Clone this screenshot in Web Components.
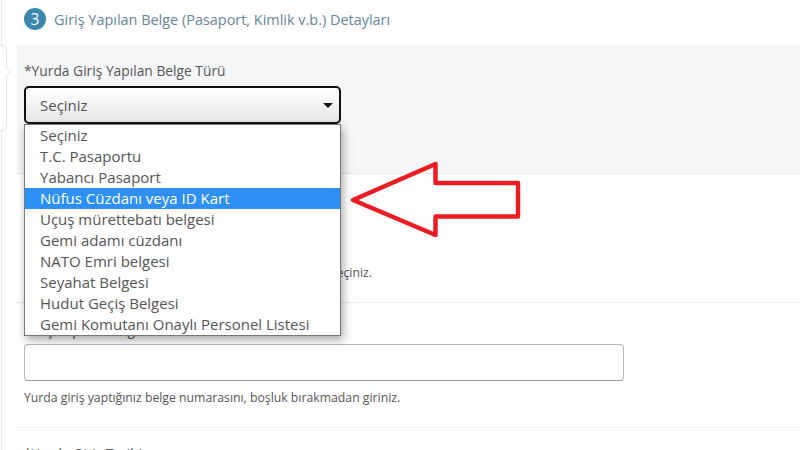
<!DOCTYPE html>
<html lang="tr">
<head>
<meta charset="UTF-8">
<title>Belge Detayları</title>
<style>
  html, body { margin: 0; height: 450px; overflow: hidden; background: #fff; }
  body { font-family: "Open Sans", "Liberation Sans", sans-serif; color: #555; }
</style>
</head>
<body>
<template id="tpl-page">
  <style>
    :host { display: block; position: relative; height: 450px; overflow: hidden; padding-left: 17px; box-sizing: border-box; }
    .rail { position: absolute; left: 1px; top: 0; bottom: 0; width: 1px; background: #e8e8e8; }
    .bubble { position: absolute; left: -10px; top: 45px; width: 15px; height: 84px; background: #fff; border: 1px solid #dfe6ee; border-radius: 5px; }
    .bubble::after { content: ""; position: absolute; right: -4px; top: 22px; width: 6px; height: 6px; background: #fff; border-top: 1px solid #dfe6ee; border-right: 1px solid #dfe6ee; transform: rotate(45deg); }
  </style>
  <div class="rail"></div>
  <div class="bubble"></div>
  <slot></slot>
</template>

<template id="tpl-heading">
  <style>
    :host { display: flex; align-items: center; gap: 8px; height: 45px; padding: 0 0 7px 7px; box-sizing: border-box; color: #64859c; font-size: 14.45px; }
    .num { width: 22px; height: 22px; border-radius: 50%; background: #3b87ad; color: #fff; font-size: 15.5px; display: flex; align-items: center; justify-content: center; }
  </style>
  <span class="num"><slot name="num"></slot></span>
  <span><slot></slot></span>
</template>

<template id="tpl-row">
  <style>
    :host { display: block; box-sizing: border-box; padding: 0 0 0 7px; border-bottom: 1px dotted #dcdcdc; }
    :host([shaded]) { background: #f5f6f8; }
  </style>
  <slot></slot>
</template>

<template id="tpl-label">
  <style>
    :host { display: block; font-size: 13.8px; line-height: 20px; color: #555; }
  </style>
  <slot></slot>
</template>

<template id="tpl-hint">
  <style>
    :host { display: block; font-size: 12.25px; line-height: 16px; color: #555; }
  </style>
  <slot></slot>
</template>

<template id="tpl-select">
  <style>
    :host { display: flex; align-items: center; justify-content: space-between; box-sizing: border-box; width: 317px; height: 38px; padding: 0 6px 0 14px; border: 2px solid #111; border-radius: 5px; background: linear-gradient(#fff, #e6e6e6); font-size: 15px; color: #555; }
    i { width: 0; height: 0; border: 5px solid transparent; border-top: 5px solid #111; border-bottom: 0; }
  </style>
  <span><slot></slot></span><i></i>
</template>

<template id="tpl-input">
  <style>
    :host { display: block; box-sizing: border-box; width: 600px; height: 37px; background: #fff; border: 1px solid #b9b9b9; border-bottom-color: #a0a0a0; border-radius: 4px; }
  </style>
</template>

<template id="tpl-menu">
  <style>
    :host { display: block; position: absolute; left: 24px; top: 124px; width: 317px; height: 212px; box-sizing: border-box; background: #fff; border: 1px solid #777; box-shadow: 2px 4px 9px rgba(0,0,0,.35); }
  </style>
  <slot></slot>
</template>

<template id="tpl-option">
  <style>
    :host { display: block; height: 21px; line-height: 21px; padding-left: 15px; font-size: 15px; color: #555; white-space: nowrap; }
    :host([active]) { background: #2e90f5; color: #fff; }
  </style>
  <slot></slot>
</template>

<template id="tpl-arrow">
  <style>
    :host { display: block; position: absolute; left: 348px; top: 158px; width: 176px; height: 82px; }
    svg { display: block; }
  </style>
  <svg width="176" height="82" viewBox="348 158 176 82">
    <path d="M353 200 L435.5 164 L435.5 183 L518 183 L518 216.5 L435.5 216.5 L435.5 235 Z" fill="none" stroke="#ea1c24" stroke-width="4.5" stroke-linejoin="round"/>
  </svg>
</template>

<script>
  function define(name, tplId) {
    customElements.define(name, class extends HTMLElement {
      constructor() {
        super()
        this.attachShadow({ mode: "open" })
        this.shadowRoot.append(document.getElementById(tplId).content.cloneNode(true))
      }
    })
  }
  define("form-page", "tpl-page")
  define("step-heading", "tpl-heading")
  define("form-row", "tpl-row")
  define("form-label", "tpl-label")
  define("form-hint", "tpl-hint")
  define("form-select", "tpl-select")
  define("form-input", "tpl-input")
  define("select-menu", "tpl-menu")
  define("select-option", "tpl-option")
  define("red-arrow", "tpl-arrow")
</script>

<form-page>
  <step-heading><span slot="num">3</span>Giriş Yapılan Belge (Pasaport, Kimlik v.b.) Detayları</step-heading>

  <form-row shaded style="height:129px;padding-top:16px">
    <form-label style="margin-bottom:5px">*Yurda Giriş Yapılan Belge Türü</form-label>
    <form-select>Seçiniz</form-select>
  </form-row>

  <form-row style="height:129px;padding-top:91px">
    <form-hint style="word-spacing:.25px">Yurda giriş yaptığınız belgenin türünü listeden açarak seçiniz.</form-hint>
  </form-row>

  <form-row style="height:125px;padding-top:17px">
    <form-label style="margin-bottom:4px">Giriş Yapılan Belge No</form-label>
    <form-input></form-input>
    <form-hint style="margin-top:9px">Yurda giriş yaptığınız belge numarasını, boşluk bırakmadan giriniz.</form-hint>
  </form-row>

  <form-row style="padding-top:16px;border:0">
    <form-label>*Yurda Giriş Tarihi</form-label>
  </form-row>

  <select-menu>
    <select-option>Seçiniz</select-option>
    <select-option>T.C. Pasaportu</select-option>
    <select-option>Yabancı Pasaport</select-option>
    <select-option active>Nüfus Cüzdanı veya ID Kart</select-option>
    <select-option>Uçuş mürettebatı belgesi</select-option>
    <select-option>Gemi adamı cüzdanı</select-option>
    <select-option>NATO Emri belgesi</select-option>
    <select-option>Seyahat Belgesi</select-option>
    <select-option>Hudut Geçiş Belgesi</select-option>
    <select-option>Gemi Komutanı Onaylı Personel Listesi</select-option>
  </select-menu>

  <red-arrow></red-arrow>
</form-page>
</body>
</html>
